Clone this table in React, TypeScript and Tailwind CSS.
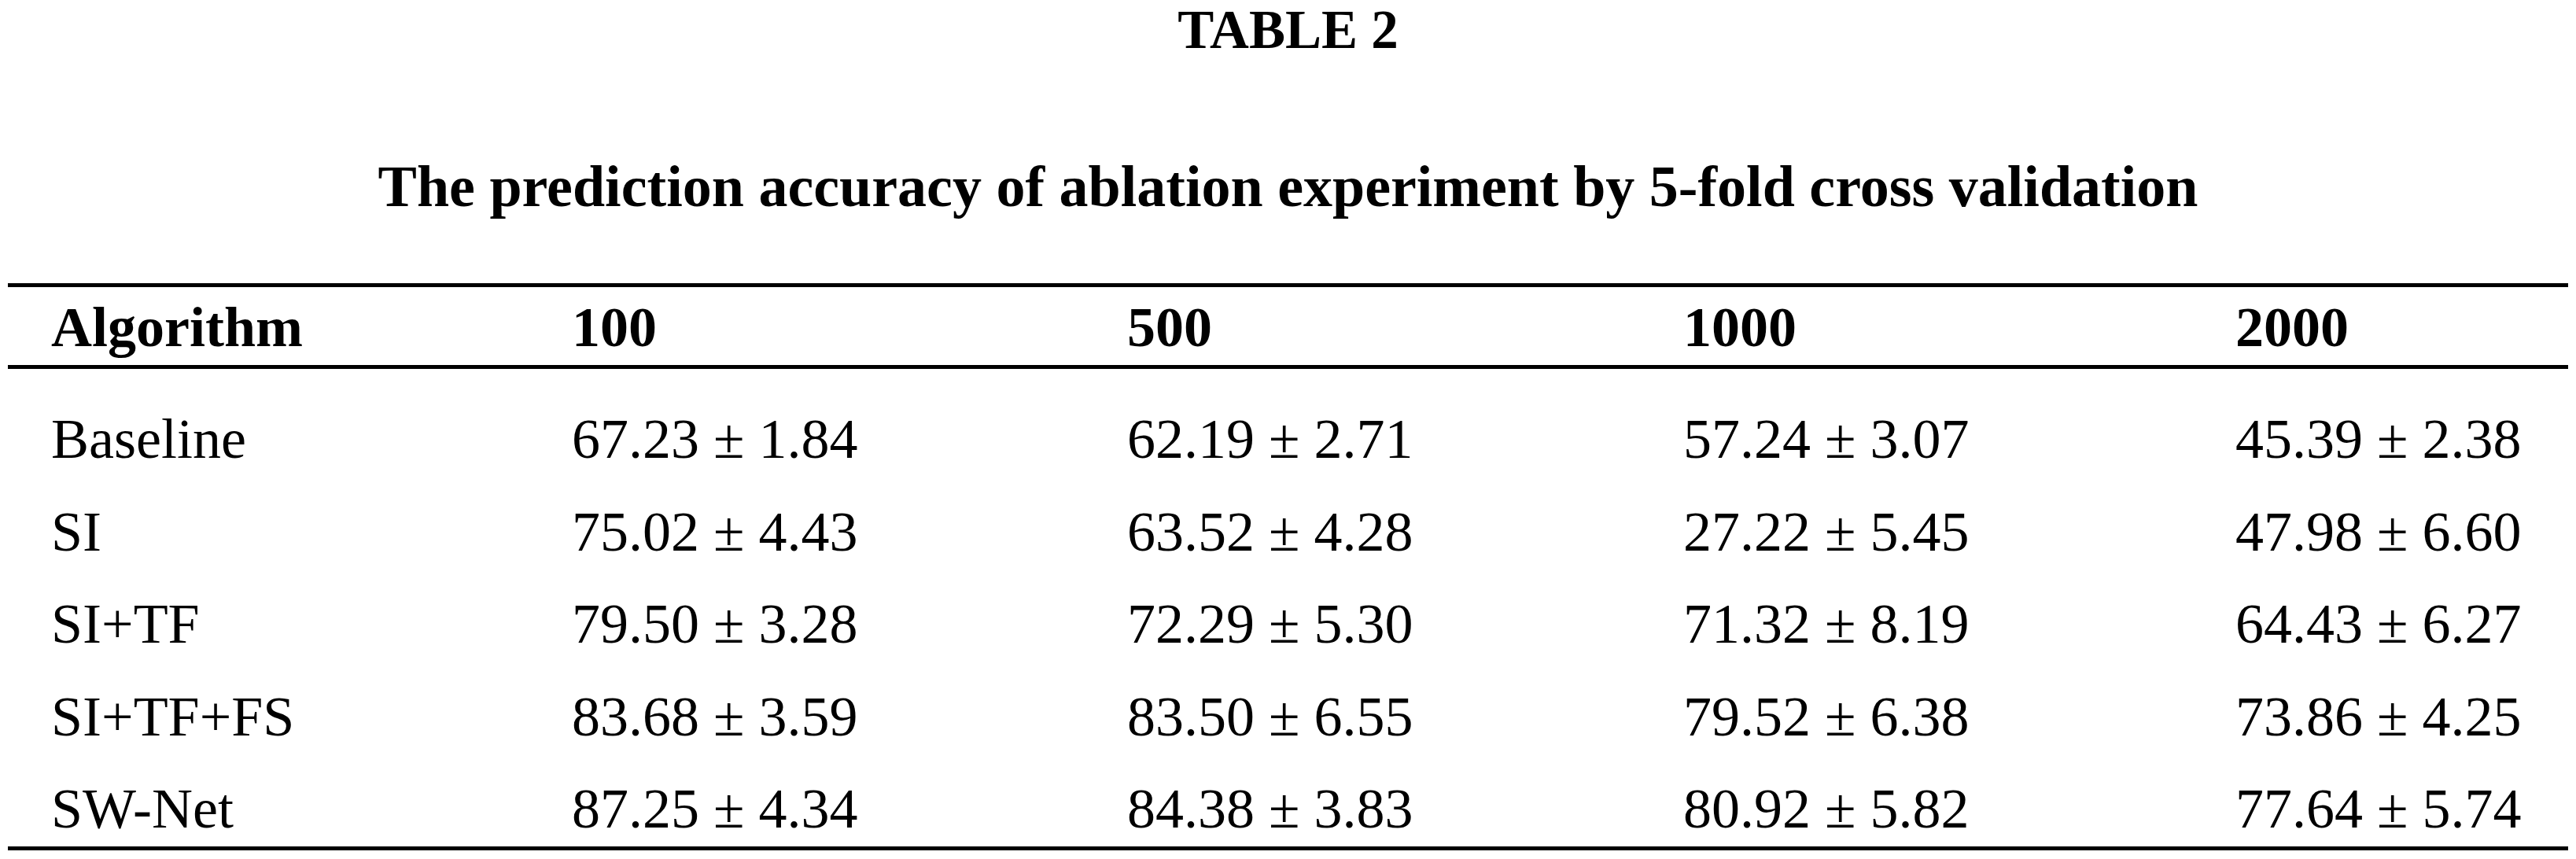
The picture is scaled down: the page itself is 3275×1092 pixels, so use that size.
const rows = [
  { name: 'Baseline', values: ['67.23 ± 1.84', '62.19 ± 2.71', '57.24 ± 3.07', '45.39 ± 2.38'] },
  { name: 'SI', values: ['75.02 ± 4.43', '63.52 ± 4.28', '27.22 ± 5.45', '47.98 ± 6.60'] },
  { name: 'SI+TF', values: ['79.50 ± 3.28', '72.29 ± 5.30', '71.32 ± 8.19', '64.43 ± 6.27'] },
  { name: 'SI+TF+FS', values: ['83.68 ± 3.59', '83.50 ± 6.55', '79.52 ± 6.38', '73.86 ± 4.25'] },
  { name: 'SW-Net', values: ['87.25 ± 4.34', '84.38 ± 3.83', '80.92 ± 5.82', '77.64 ± 5.74'] },
]

const headers = ['Algorithm', '100', '500', '1000', '2000']

const cols = 'grid grid-cols-[662px_706px_707px_702px_1fr] pl-[55px]'

export default function App() {
  return (
    <div className="w-[3275px] h-[1092px] bg-white text-black font-['Liberation_Serif',serif] flex flex-col">
      <h1 className="pt-[4px] text-center text-[69px] leading-none font-bold">TABLE 2</h1>
      <h2 className="mt-[127px] text-center text-[74px] leading-none font-bold">
        The prediction accuracy of ablation experiment by 5-fold cross validation
      </h2>

      <div className="mx-[10px] mt-[86px] border-t-[5px] border-b-[5px] border-black">
        {/* header */}
        <div className={`${cols} pt-[15px] pb-[12px] border-b-[5px] border-black`}>
          {headers.map((h) => (
            <div key={h} className="text-[72px] leading-none font-bold">
              {h}
            </div>
          ))}
        </div>

        {/* body */}
        <div className="pt-[53px] pb-[12px] flex flex-col gap-[45.5px]">
          {rows.map((r) => (
            <div key={r.name} className={cols}>
              <div className="text-[72px] leading-none">{r.name}</div>
              {r.values.map((v, i) => (
                <div key={i} className="text-[72px] leading-none whitespace-nowrap">
                  {v}
                </div>
              ))}
            </div>
          ))}
        </div>
      </div>
    </div>
  )
}
